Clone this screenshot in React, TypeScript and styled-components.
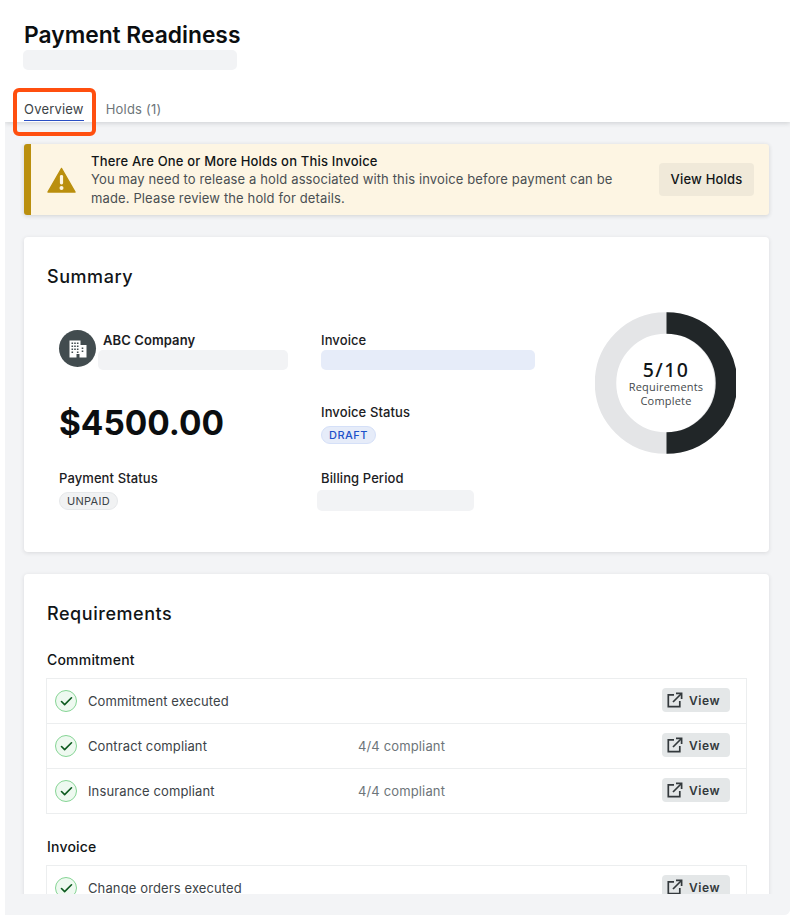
import styled, { createGlobalStyle } from 'styled-components';
import { Check } from 'lucide-react';

const GlobalStyle = createGlobalStyle`
  html, body { margin: 0; padding: 0; background: #fff; }
  body { font-family: Inter, "Liberation Sans", sans-serif; color: #111517; }
  * { box-sizing: border-box; }
`;

const Page = styled.div`
  position: relative;
  width: 796px;
  height: 921px;
  padding-left: 5px;
  overflow: hidden;
`;

const Frame = styled.div`
  display: flex;
  flex-direction: column;
  width: 785px;
  height: 915px;
  overflow: hidden;
  border-bottom-right-radius: 6px;
  background: #f3f4f6;
`;

const Header = styled.header`
  flex: none;
  height: 122px;
  padding: 21px 0 0 19px;
  background: #fff;
  box-shadow: 0 1px 5px rgba(30, 35, 40, 0.18);
  position: relative;
  z-index: 1;
`;

const Title = styled.h1`
  margin: 0;
  font-size: 22.8px;
  line-height: 28px;
  font-weight: 600;
  color: #0b0e10;
`;

const Redacted = styled.div<{ $w: number; $tone?: 'blue' }>`
  width: ${(p) => p.$w}px;
  height: 20px;
  border-radius: 5px;
  background: ${(p) => (p.$tone === 'blue' ? '#e6ecf9' : '#f2f3f5')};
`;

const TitleRedacted = styled(Redacted)`
  margin: 1px 0 0 -1px;
`;

const Tabs = styled.nav`
  display: flex;
  gap: 22px;
  margin-top: 29px;
`;

const Tab = styled.div<{ $active?: boolean }>`
  height: 22px;
  font-size: 13px;
  line-height: 20px;
  letter-spacing: 0.2px;
  color: ${(p) => (p.$active ? '#3c4347' : '#6d757a')};
  border-bottom: ${(p) => (p.$active ? '1px solid #2a4fc4' : '0')};
`;

const TabHighlight = styled.div`
  position: absolute;
  left: 13px;
  top: 88px;
  width: 83px;
  height: 48px;
  border: 4px solid #ff4f0f;
  border-radius: 6px;
  z-index: 2;
`;

const Main = styled.main`
  flex: 1;
  min-height: 0;
  overflow: hidden;
  display: flex;
  flex-direction: column;
  gap: 22px;
  padding: 22px 21px 0 19px;
`;

const Footer = styled.footer`
  flex: none;
  height: 21px;
  background: #f3f4f6;
`;

const Banner = styled.section`
  flex: none;
  display: flex;
  align-items: center;
  height: 71px;
  padding-right: 15px;
  border-left: 7px solid #ba8f0e;
  border-radius: 3px;
  background: #fdf5e3;
  box-shadow: 0 1px 4px rgba(30, 35, 40, 0.16);
`;

const BannerIcon = styled.svg`
  flex: none;
  width: 29px;
  height: 26px;
  margin: 0 15px 0 16px;
`;

const BannerText = styled.div`
  flex: 1;
  font-size: 13px;
  line-height: 18.5px;
  letter-spacing: 0.13px;
  color: #4a4f52;
`;

const BannerTitle = styled.div`
  font-weight: 500;
  letter-spacing: 0.18px;
  color: #111517;
`;

const BannerButton = styled.button`
  flex: none;
  width: 95px;
  height: 33px;
  padding: 0 0 2px;
  border: 0;
  border-radius: 4px;
  background: #f0e9d9;
  font: 500 13px Inter, sans-serif;
  letter-spacing: 0.2px;
  color: #111517;
`;

const Card = styled.section`
  flex: none;
  padding: 29px 22px 0;
  border-radius: 4px;
  background: #fff;
  box-shadow: 0 1px 4px rgba(30, 35, 40, 0.12);
`;

const SummaryCard = styled(Card)`
  height: 315px;
`;

const RequirementsCard = styled(Card)`
  padding-bottom: 24px;
`;

const CardTitle = styled.h2`
  margin: 0 0 0 1px;
  font-size: 18px;
  line-height: 22px;
  font-weight: 500;
  letter-spacing: 0.55px;
  color: #111517;
`;

const SummaryBody = styled.div`
  position: relative;
  display: grid;
  grid-template-columns: 262px 1fr;
  grid-template-rows: 72px 66px 60px;
  margin-top: 44px;
  padding-left: 13px;
`;

const FieldLabel = styled.div`
  font-size: 13px;
  line-height: 16px;
  font-weight: 500;
  letter-spacing: 0.1px;
  color: #1b2023;
`;

const Field = styled.div`
  display: flex;
  flex-direction: column;
  align-items: flex-start;
  gap: 2px;
`;

const Company = styled.div`
  display: flex;
  align-items: flex-start;
  gap: 7px;
`;

const CompanyAvatar = styled.div`
  flex: none;
  display: flex;
  align-items: center;
  justify-content: center;
  width: 37px;
  height: 37px;
  margin-top: -2px;
  border-radius: 50%;
  background: #424c4f;
`;

const CompanyText = styled.div`
  display: flex;
  flex-direction: column;
  gap: 2px;
`;

const CompanyName = styled(FieldLabel)`
  font-weight: 600;
`;

const CompanyRedacted = styled(Redacted)`
  margin-left: -5px;
`;

const Amount = styled.div`
  margin-top: -2px;
  font-size: 33.4px;
  line-height: 42px;
  font-weight: 700;
  color: #0b0e10;
`;

const Pill = styled.span<{ $tone: 'blue' | 'grey' }>`
  margin-top: 4px;
  height: 18px;
  padding: 0 7px;
  border-radius: 9px;
  border: 1px solid ${(p) => (p.$tone === 'blue' ? '#d5e0f8' : '#e6e8ea')};
  background: ${(p) => (p.$tone === 'blue' ? '#e6ecf9' : '#f1f2f3')};
  font-size: 11px;
  line-height: 16px;
  font-weight: ${(p) => (p.$tone === 'blue' ? 500 : 400)};
  letter-spacing: ${(p) => (p.$tone === 'blue' ? 0.5 : 0.3)}px;
  color: ${(p) => (p.$tone === 'blue' ? '#1d52c9' : '#3c4347')};
`;

const PeriodRedacted = styled(Redacted)`
  margin: 2px 0 0 -4px;
  height: 21px;
`;

const Donut = styled.div`
  position: absolute;
  left: 549px;
  top: -20px;
  width: 141px;
  height: 142px;
`;

const DonutCenter = styled.div`
  position: absolute;
  inset: 0 0 0 1px;
  padding-top: 2px;
  display: flex;
  flex-direction: column;
  align-items: center;
  justify-content: center;
  font-family: "Open Sans", sans-serif;
  font-size: 11px;
  line-height: 14px;
  letter-spacing: 0.2px;
  color: #44494c;
`;

const DonutValue = styled.div`
  font-family: "Noto Sans", sans-serif;
  font-size: 19.5px;
  line-height: 20px;
  font-weight: 500;
  letter-spacing: 1.4px;
  color: #111517;
`;

const GroupTitle = styled.h3`
  margin: 0 0 9px 1px;
  font-size: 14px;
  line-height: 18px;
  font-weight: 500;
  letter-spacing: 0.2px;
  color: #111517;
`;

const CommitmentTitle = styled(GroupTitle)`
  margin-top: 26px;
`;

const InvoiceTitle = styled(GroupTitle)`
  margin-top: 24px;
`;

const Table = styled.div`
  border: 1px solid #eceeef;
`;

const Row = styled.div`
  display: grid;
  grid-template-columns: 22px 281px 1fr 68px;
  align-items: center;
  height: 44px;
  padding: 0 16px 0 8px;
  font-size: 13px;
  letter-spacing: 0.12px;
  color: #3c4347;
  & + & {
    height: 45px;
    border-top: 1px solid #eceeef;
  }
`;

const CheckBadge = styled.div`
  display: flex;
  align-items: center;
  justify-content: center;
  width: 22px;
  height: 22px;
  border-radius: 50%;
  border: 1px solid #86d595;
  background: #eef9f0;
  color: #0d5a1f;
`;

const RowLabel = styled.span`
  padding-left: 11px;
`;

const RowNote = styled.span`
  letter-spacing: 0.14px;
  color: #6d757a;
`;

const ViewButton = styled.button`
  display: flex;
  align-items: center;
  gap: 6px;
  width: 68px;
  height: 24px;
  margin-top: -2px;
  padding: 0 0 0 5px;
  border: 0;
  border-radius: 4px;
  background: #e4e7e8;
  font: 600 12px Inter, sans-serif;
  letter-spacing: 0.6px;
  color: #33393c;
`;

const ViewIcon = styled.svg`
  flex: none;
  width: 16px;
  height: 16px;
`;

const rows1 = [
  { label: 'Commitment executed' },
  { label: 'Contract compliant', note: '4/4 compliant' },
  { label: 'Insurance compliant', note: '4/4 compliant' },
];

const rows2 = [{ label: 'Change orders executed' }];

function Requirement({ label, note }: { label: string; note?: string }) {
  return (
    <Row>
      <CheckBadge><Check size={15} strokeWidth={2.6} /></CheckBadge>
      <RowLabel>{label}</RowLabel>
      <RowNote>{note}</RowNote>
      <ViewButton>
        <ViewIcon viewBox="0 0 16 16" fill="none" stroke="currentColor" strokeWidth="1.7">
          <path d="M7 2.9H1.3v11.8h11.5V9" />
          <path d="M6 10 14 2" />
          <path d="M9 1.4h5.6V7" />
        </ViewIcon>
        View
      </ViewButton>
    </Row>
  );
}

export default function App() {
  return (
    <Page>
      <GlobalStyle />
      <Frame>
        <Header>
          <Title>Payment Readiness</Title>
          <TitleRedacted $w={214} />
          <Tabs>
            <Tab $active>Overview</Tab>
            <Tab>Holds (1)</Tab>
          </Tabs>
        </Header>
        <Main>
          <Banner>
            <BannerIcon viewBox="0 0 29 26">
              <path d="M14.5 1.5 L28 25 H1 Z" fill="#ba8f0e" stroke="#ba8f0e" strokeLinejoin="round" strokeWidth="1.5" />
              <rect x="12.9" y="8" width="3.2" height="9.5" rx="1.4" fill="#fdf5e3" />
              <circle cx="14.5" cy="21" r="2" fill="#fdf5e3" />
            </BannerIcon>
            <BannerText>
              <BannerTitle>There Are One or More Holds on This Invoice</BannerTitle>
              You may need to release a hold associated with this invoice before payment can be
              <br />
              made. Please review the hold for details.
            </BannerText>
            <BannerButton>View Holds</BannerButton>
          </Banner>

          <SummaryCard>
            <CardTitle>Summary</CardTitle>
            <SummaryBody>
              <Company>
                <CompanyAvatar>
                  <svg width="18" height="18" viewBox="0 0 18 18">
                    <path
                      fill="#fff"
                      fillRule="evenodd"
                      d="M0.5 0.5h11v4.5h6v12.5h-7v-3.5h-3v3.5h-7z M2.5 2.5v1.6h1.6V2.5z M5.2 2.5v1.6h1.6V2.5z M7.9 2.5v1.6h1.6V2.5z M2.5 5.5v1.6h1.6V5.5z M5.2 5.5v1.6h1.6V5.5z M7.9 5.5v1.6h1.6V5.5z M2.5 8.5v1.6h1.6V8.5z M5.2 8.5v1.6h1.6V8.5z M7.9 8.5v1.6h1.6V8.5z M12.7 7.5v1.6h1.6V7.5z M12.7 10.5v1.6h1.6v-1.6z M2.5 11.5v1.6h1.6v-1.6z M7.9 11.5v1.6h1.6v-1.6z"
                    />
                  </svg>
                </CompanyAvatar>
                <CompanyText>
                  <CompanyName>ABC Company</CompanyName>
                  <CompanyRedacted $w={190} />
                </CompanyText>
              </Company>
              <Field>
                <FieldLabel>Invoice</FieldLabel>
                <Redacted $w={214} $tone="blue" />
              </Field>
              <Amount>$4500.00</Amount>
              <Field>
                <FieldLabel>Invoice Status</FieldLabel>
                <Pill $tone="blue">DRAFT</Pill>
              </Field>
              <Field>
                <FieldLabel>Payment Status</FieldLabel>
                <Pill $tone="grey">UNPAID</Pill>
              </Field>
              <Field>
                <FieldLabel>Billing Period</FieldLabel>
                <PeriodRedacted $w={157} />
              </Field>
              <Donut>
                <svg width="141" height="142" viewBox="0 0 141 142">
                  <circle cx="70.5" cy="71" r="60" fill="none" stroke="#e4e5e7" strokeWidth="21.5" />
                  <path d="M71.5 11 A60 60 0 0 1 71.5 131" fill="none" stroke="#212628" strokeWidth="21.5" />
                </svg>
                <DonutCenter>
                  <DonutValue>5/10</DonutValue>
                  <div>Requirements</div>
                  <div>Complete</div>
                </DonutCenter>
              </Donut>
            </SummaryBody>
          </SummaryCard>

          <RequirementsCard>
            <CardTitle>Requirements</CardTitle>
            <CommitmentTitle>Commitment</CommitmentTitle>
            <Table>
              {rows1.map((r) => <Requirement key={r.label} label={r.label} note={r.note} />)}
            </Table>
            <InvoiceTitle>Invoice</InvoiceTitle>
            <Table>
              {rows2.map((r) => <Requirement key={r.label} label={r.label} />)}
            </Table>
          </RequirementsCard>
        </Main>
        <Footer />
      </Frame>
      <TabHighlight />
    </Page>
  );
}
